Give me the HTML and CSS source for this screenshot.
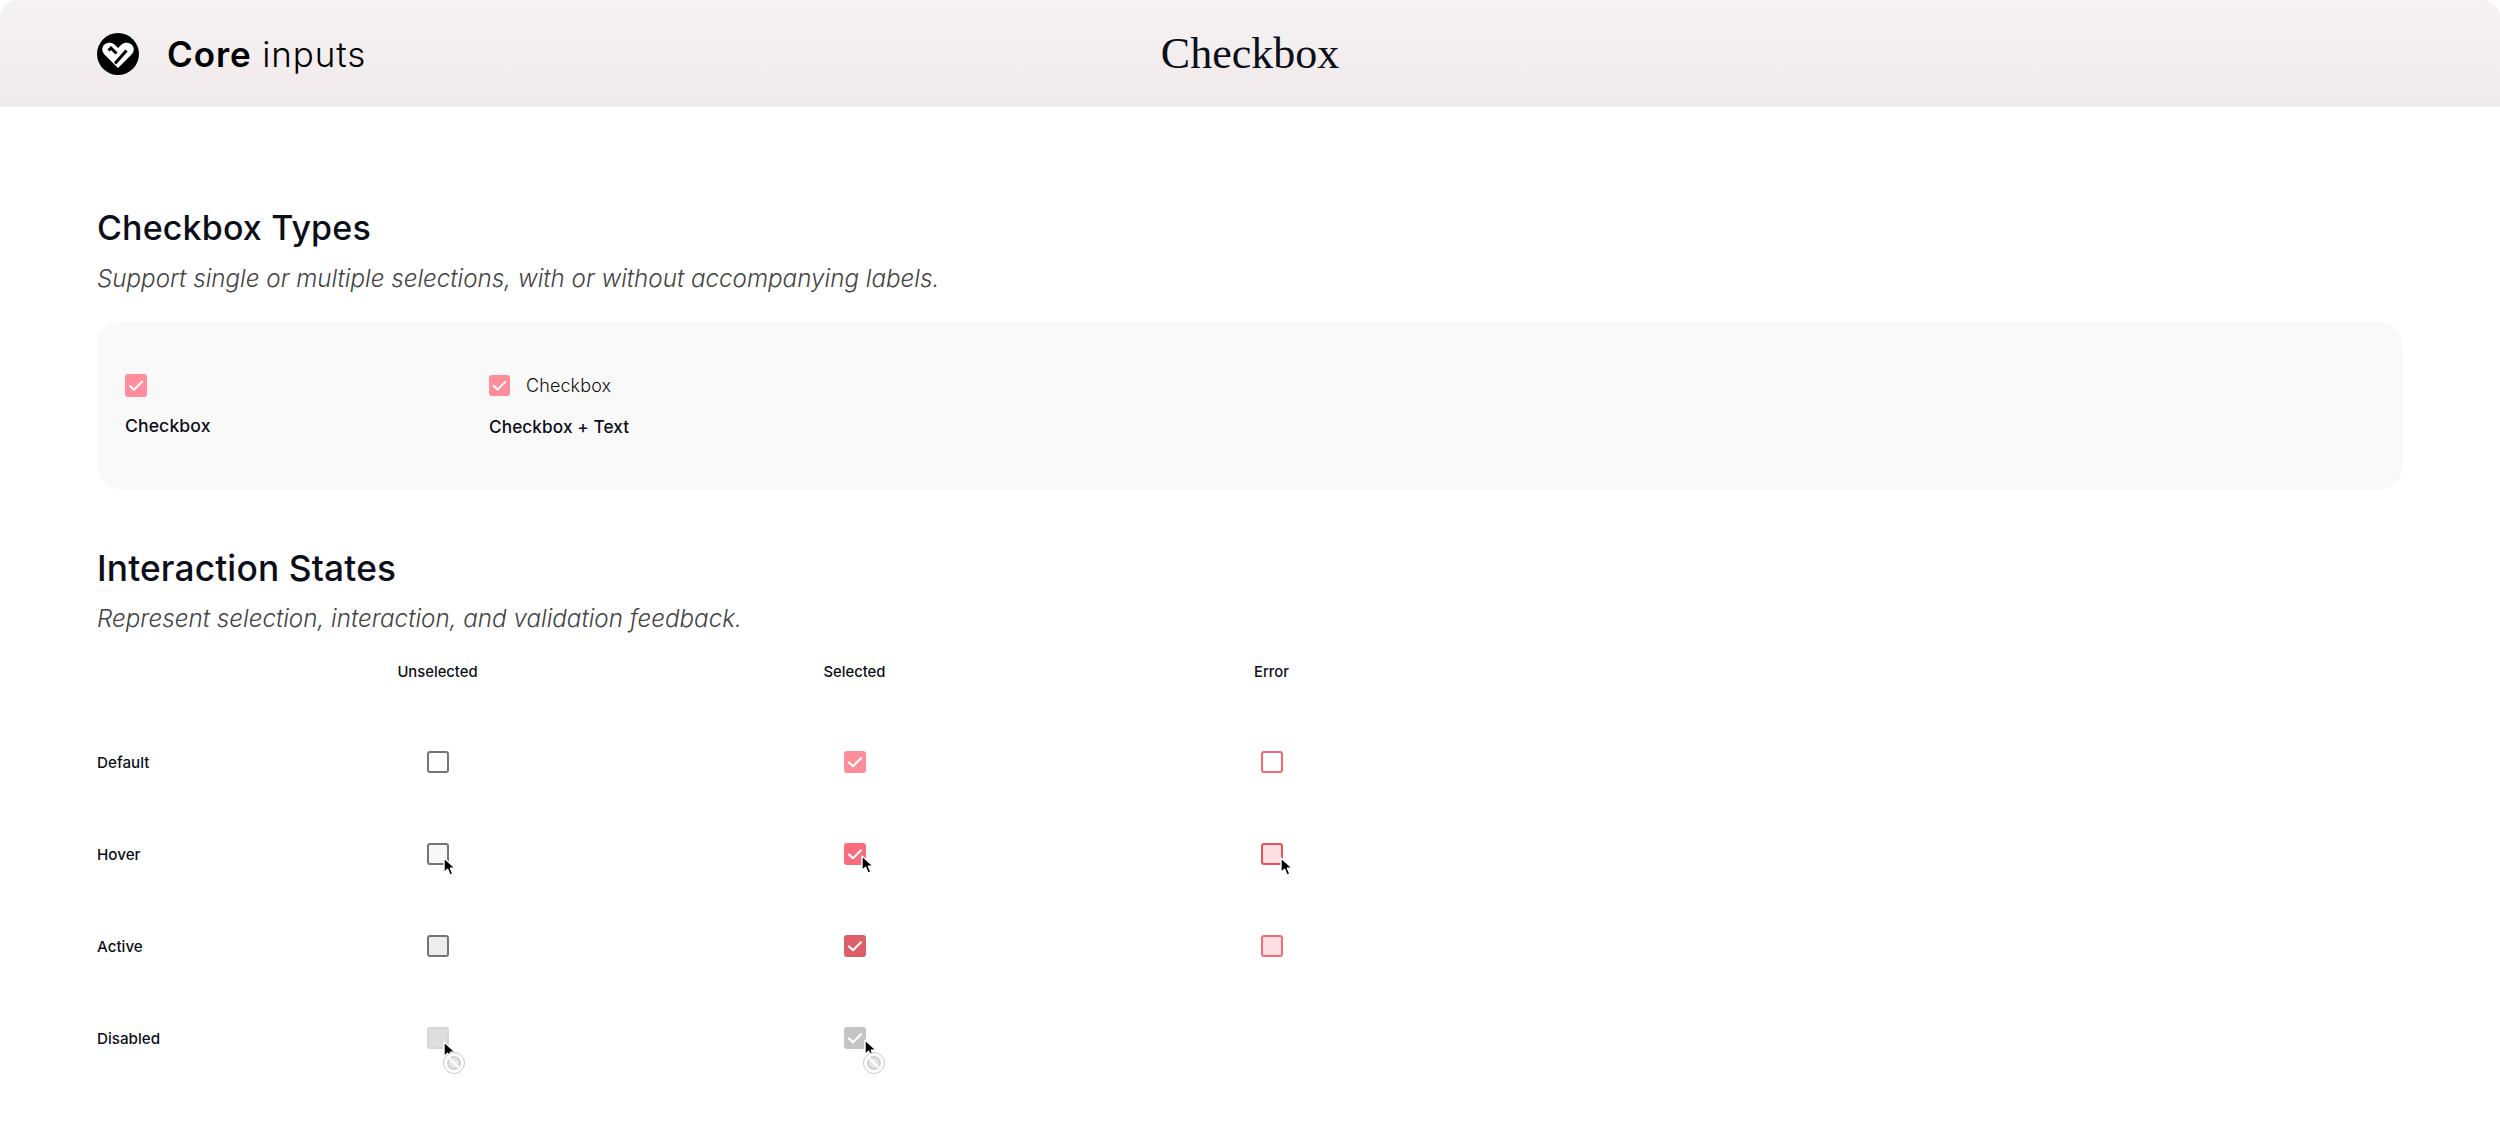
FILE: index.html
```html
<!DOCTYPE html>
<html lang="en">
<head>
<meta charset="utf-8">
<title>Checkbox</title>
<link rel="stylesheet" href="styles.css">
</head>
<body>
<svg class="defs" width="0" height="0" aria-hidden="true">
  <symbol id="tick" viewBox="0 0 22 22"><path d="M5 11.500l4 3.700 8-8" fill="none" stroke="currentColor" stroke-width="2.200" stroke-linecap="round" stroke-linejoin="round"/></symbol>
  <symbol id="cursor" viewBox="0 0 14 20"><path d="M1 1v14.500l3.600-3.300 2.500 6 2.800-1.200-2.500-5.800h5z" fill="#000" stroke="#fff" stroke-width="1.400" stroke-linejoin="round"/></symbol>
  <symbol id="ban" viewBox="0 0 22 22"><circle cx="11" cy="11" r="10.500" fill="#fff" stroke="#c8c8c8" stroke-width="1"/><circle cx="11" cy="11" r="7" fill="#cfcfcf"/><circle cx="11" cy="11" r="5" fill="#e6e6e6"/><path d="M6 6l10 10" stroke="#fff" stroke-width="2.400"/></symbol>
</svg>
<main class="page">
  <header class="topbar">
    <div class="brand">
      <svg class="logo" viewBox="0 0 42 42" aria-hidden="true">
        <circle cx="21" cy="21" r="21" fill="#000"/>
        <path d="M21 35L7.500 21.500C4.500 18.500 4.500 14 7.500 11.500C10.500 9 14.500 9 17.500 11.500L21 15L24.500 11.500C27.500 9 31.500 9 34.500 11.500C37.500 14 37.500 18.500 34.500 21.500Z" fill="#fff"/>
        <path d="M11.500 17.500l2.500-2.500 5.500 5.500" fill="none" stroke="#000" stroke-width="3"/>
        <path d="M18 30.500L29.500 17.500" fill="none" stroke="#000" stroke-width="3"/>
      </svg>
      <div class="brand-name"><strong>Core</strong> inputs</div>
    </div>
    <h1 class="page-title">Checkbox</h1>
  </header>

  <section class="types">
    <h2 class="section-title">Checkbox Types</h2>
    <p class="section-note">Support single or multiple selections, with or without accompanying labels.</p>
    <div class="card">
      <div class="type type-plain">
        <span class="box sel big"><svg><use href="#tick"/></svg></span>
        <div class="type-label">Checkbox</div>
      </div>
      <div class="type type-text">
        <div class="with-text">
          <span class="box sel small"><svg><use href="#tick"/></svg></span>
          <span class="box-text">Checkbox</span>
        </div>
        <div class="type-label">Checkbox + Text</div>
      </div>
    </div>
  </section>

  <section class="states">
    <h2 class="section-title wide">Interaction States</h2>
    <p class="section-note">Represent selection, interaction, and validation feedback.</p>
    <div class="matrix">
      <div class="head"></div>
      <div class="head">Unselected</div>
      <div class="head">Selected</div>
      <div class="head">Error</div>

      <div class="row-label">Default</div>
      <div class="cell"><span class="box off"></span></div>
      <div class="cell"><span class="box sel"><svg><use href="#tick"/></svg></span></div>
      <div class="cell"><span class="box err"></span></div>

      <div class="row-label">Hover</div>
      <div class="cell"><span class="box off hover"><svg class="cursor c-off"><use href="#cursor"/></svg></span></div>
      <div class="cell"><span class="box sel hover"><svg><use href="#tick"/></svg><svg class="cursor c-sel"><use href="#cursor"/></svg></span></div>
      <div class="cell"><span class="box err hover"><svg class="cursor c-err"><use href="#cursor"/></svg></span></div>

      <div class="row-label">Active</div>
      <div class="cell"><span class="box off active"></span></div>
      <div class="cell"><span class="box sel active"><svg><use href="#tick"/></svg></span></div>
      <div class="cell"><span class="box err active"></span></div>

      <div class="row-label">Disabled</div>
      <div class="cell"><span class="box off disabled"><svg class="cursor c-off"><use href="#cursor"/></svg><svg class="ban"><use href="#ban"/></svg></span></div>
      <div class="cell"><span class="box sel disabled"><svg><use href="#tick"/></svg><svg class="cursor c-sel2"><use href="#cursor"/></svg><svg class="ban"><use href="#ban"/></svg></span></div>
      <div class="cell"></div>
    </div>
  </section>
</main>
</body>
</html>
```

FILE: styles.css
```css
* { box-sizing: border-box; }
html, body { margin: 0; padding: 0; background: #fff; }
.defs { position: absolute; }
.page {
  width: 2500px;
  height: 1144px;
  overflow: hidden;
  border-radius: 18px;
  font-family: "Inter", "Liberation Sans", sans-serif;
  color: #0c0f1a;
  background: #fff;
}
.topbar {
  height: 107px;
  position: relative;
  display: flex;
  align-items: center;
  padding-left: 97px;
  background: linear-gradient(180deg, #f6f1f2 0%, #f0eaeb 100%);
}
.brand { display: flex; align-items: center; gap: 28px; }
.logo { width: 42px; height: 42px; display: block; }
.brand-name {
  font-size: 35px;
  font-weight: 300;
  letter-spacing: 0.9px;
  color: #000;
  line-height: 42px;
}
.brand-name strong { font-weight: 600; }
.page-title {
  position: absolute;
  left: 0;
  right: 0;
  top: 28px;
  margin: 0;
  text-align: center;
  font-family: "Liberation Serif", serif;
  font-weight: 400;
  font-size: 44px;
  line-height: 52px;
  color: #0c0f1a;
}
.types { padding: 99px 97px 0 97px; }
.section-title {
  margin: 0;
  font-size: 34px;
  font-weight: 500;
  line-height: 44px;
  letter-spacing: 0.15px;
  color: #0c0f1a;
}
.section-title.wide { font-size: 35.300px; }
.section-note {
  margin: 14px 0 0;
  font-size: 24.200px;
  font-style: italic;
  font-weight: 300;
  line-height: 30px;
  color: #444;
}
.states .section-note { margin-top: 13px; }
.card {
  margin-top: 28px;
  height: 167px;
  background: #f9f9f9;
  border-radius: 24px;
  display: flex;
  padding: 52px 28px 0;
}
.type-plain { width: 364px; }
.type-label {
  font-size: 17.600px;
  font-weight: 500;
  line-height: 22px;
  letter-spacing: 0.1px;
  color: #0c0f1a;
}
.type-text .type-label { font-size: 17.200px; }
.type-plain .type-label { margin-top: 18px; }
.type-text .type-label { margin-top: 20px; }
.with-text { display: flex; align-items: center; gap: 16px; height: 21px; margin-top: 1px; }
.box-text { font-size: 18px; font-weight: 300; line-height: 21px; color: #111; letter-spacing: 0.1px; }

.box {
  position: relative;
  display: block;
  width: 22px;
  height: 22px;
  border-radius: 3px;
  flex: none;
}
.box > svg:not(.cursor):not(.ban) { position: absolute; inset: 0; width: 100%; height: 100%; color: #fff; display: block; }
.box.big { height: 23px; }
.box.small { width: 21px; height: 21px; }
.box.sel { background: #ff8d9b; }
.box.sel.hover { background: #fb6b7e; }
.box.sel.active { background: #de5e67; }
.box.sel.disabled { background: #c4c4c4; }
.box.off { background: #fff; border: 2px solid #757575; }
.box.off.hover { background: #f8f8f8; }
.box.off.active { background: #ededed; }
.box.off.disabled { background: #dedede; border-color: #d6d6d6; }
.box.err { background: #fff; border: 2px solid #f86a73; }
.box.err.hover { background: #ffe0e2; border-color: #ec5058; }
.box.err.active { background: #ffe0e2; border-color: #f86a73; }

.cursor { position: absolute; width: 14px; height: 20px; }
.c-off { left: 14px; top: 12px; }
.c-sel { left: 17px; top: 12px; }
.c-sel2 { left: 20px; top: 12px; }
.c-err { left: 17px; top: 12px; }
.ban { position: absolute; width: 22px; height: 22px; left: 14px; top: 23px; }
.box.sel .ban { left: 19px; top: 25px; }

.states { padding: 58px 97px 0 97px; }
.matrix {
  display: grid;
  grid-template-columns: 132px repeat(3, 417px);
  grid-template-rows: 82px repeat(4, 92px);
}
.head {
  font-size: 14.800px;
  font-weight: 500;
  line-height: 20px;
  text-align: center;
  padding-top: 28px;
  color: #0c0f1a;
}
.row-label {
  font-size: 15.200px;
  font-weight: 500;
  color: #0c0f1a;
  display: flex;
  align-items: center;
}
.cell { display: flex; align-items: center; justify-content: center; }
```
